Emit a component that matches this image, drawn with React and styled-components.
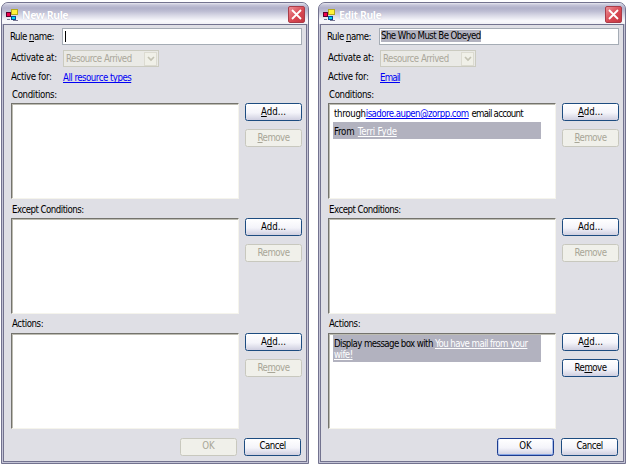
import React from 'react';
import styled, { createGlobalStyle, css } from 'styled-components';

const GlobalStyle = createGlobalStyle`
  * { box-sizing: border-box; }
  body { margin: 0; background: #fff; overflow: hidden; }
`;

const tracking = css`
  letter-spacing: ${(p) => p.$spacing ?? -0.5}px;
`;

const underline = css`
  text-decoration: underline;
  text-underline-offset: 1px;
  text-decoration-thickness: 1px;
  text-decoration-skip-ink: none;
`;

const Desktop = styled.div`
  display: flex;
  gap: 9px;
  width: 627px;
  height: 465px;
  padding: 2px 1px 0;
  font-family: "DejaVu Sans Condensed", "DejaVu Sans", sans-serif;
  font-stretch: condensed;
  font-size: 9.6px;
  line-height: 12px;
  color: #000;
`;

const Window = styled.section`
  display: flex;
  flex-direction: column;
  width: 308px;
  height: 462px;
  padding: 0 1px 1px;
  border: 1px solid #73738f;
  border-radius: 7px 7px 0 0;
  background: #c4c4d6;
  overflow: hidden;
`;

const TitleBar = styled.header`
  display: flex;
  align-items: center;
  flex: 0 0 21px;
  padding: 1px 3px 0 4px;
  margin: 0 -1px;
  background: linear-gradient(#e8e8f0 0, #c4c4d8 2px, #b1b1ca 5px, #bcbcd2 8px, #dcdce8 13px, #fafafd 18px, #f0f0f5 21px);
`;

const Title = styled.h1`
  flex: 1;
  margin: 2px 0 0 3px;
  font-family: "Noto Sans", sans-serif;
  font-size: 10.5px;
  font-weight: 700;
  line-height: 16px;
  letter-spacing: -0.4px;
  color: #fff;
  text-shadow: 0 0 1px #a9a9c0;
`;

const CloseButton = styled.button`
  display: grid;
  place-items: center;
  width: 17px;
  height: 17px;
  padding: 0;
  border: 1px solid #a93c48;
  border-radius: 2px;
  background: linear-gradient(135deg, #ec9097, #d94852 55%, #c33742);
`;

const Client = styled.div`
  flex: 1;
  padding: 3px 4px 0 7px;
  border: 1px solid #73738f;
  background: #dfdfe5;
`;

const Field = styled.div`
  display: flex;
  align-items: center;
  height: ${(p) => p.$height}px;
  margin-left: ${(p) => p.$offset || 0}px;
`;

const FieldLabel = styled.label`
  width: ${(p) => p.$width}px;
  padding-bottom: ${(p) => p.$raise || 0}px;
  white-space: nowrap;
  ${tracking}
`;

const TextBox = styled.div`
  display: flex;
  align-items: center;
  width: 240px;
  height: 17px;
  padding-left: 2px;
  border: 1px solid #a5acb5;
  background: #fff;
`;

const Caret = styled.span`
  width: 1px;
  height: 11px;
  background: #000;
`;

const Selection = styled.span`
  height: 12px;
  margin: 0 0 1px -1px;
  background: #b2b2bf;
  white-space: nowrap;
  letter-spacing: -0.56px;
`;

const Select = styled.div`
  display: flex;
  align-items: center;
  justify-content: space-between;
  width: 96px;
  height: 17px;
  padding: 0 1px 0 2px;
  border: 1px solid #cbcbc0;
  background: #eaeae6;
  color: #aaa89b;
  letter-spacing: -0.48px;
`;

const Arrow = styled.span`
  display: grid;
  place-items: center;
  width: 13px;
  height: 14px;
  border: 1px solid #dcdbd1;
  background: #f0f0e8;
`;

const Link = styled.a`
  color: ${(p) => (p.$light ? '#fff' : '#0000f5')};
  ${underline}
  ${tracking}
`;

const Group = styled.section`
  display: grid;
  grid-template: 19px 96px / 228px 57px;
  column-gap: 6px;
  margin-bottom: 0.1px;
`;

const GroupTitle = styled.h2`
  grid-column: 1 / -1;
  margin: ${(p) => p.$top}px 0 0 1px;
  font: inherit;
  line-height: 13px;
  ${tracking}
`;

const List = styled.div`
  height: 96px;
  padding: ${(p) => p.$top || 0}px 14px 0 4px;
  border: 1px solid;
  border-color: #74736d #f5f4ec #f5f4ec #74736d;
  box-shadow: inset 1px 1px #bdbcb2;
  background: #fff;
`;

const Row = styled.div`
  height: ${(p) => p.$height || 17}px;
  padding: ${(p) => p.$top || 3}px 0 0 1px;
  line-height: 11px;
  white-space: nowrap;
  background: ${(p) => (p.$selected ? '#b2b2bf' : 'transparent')};
`;

const Part = styled.span`
  margin-right: ${(p) => p.$after || 0}px;
  ${tracking}
`;

const ButtonStack = styled.div`
  display: flex;
  flex-direction: column;
  gap: 8px;
`;

const Button = styled.button`
  width: 57px;
  height: 18px;
  padding: 0 0 1px;
  border: 1px solid #1d4c80;
  border-radius: 2.5px;
  background: linear-gradient(#fff, #f4f4fa 55%, #cfcfe0);
  color: #000;
  font: inherit;
  line-height: 14px;
  ${tracking}
  ${(p) => p.$primary && css`
    border-color: #1c3c90;
    box-shadow: inset 0 -1px #86a5e4, inset 1px 0 #bfd1f3, inset -1px 0 #a9c0ec;
  `}
  &:disabled {
    border-color: #c8c8be;
    background: #f0f0ea;
    color: #a8a697;
  }
`;

const Footer = styled.footer`
  display: flex;
  justify-content: flex-end;
  gap: 7px;
  padding: 8.6px 1px 0 0;
`;

const Key = styled.span`
  ${underline}
`;

function FormIcon() {
  return (
    <svg width="13" height="13" viewBox="0 0 13 13">
      <path d="M1 11.5h3M7 12.5h5" stroke="#777792" />
      <rect x=".5" y="4.5" width="4" height="4" fill="#f0004d" stroke="#5b002c" />
      <rect x="5.5" y="1.5" width="6" height="5" fill="#fff23a" stroke="#b3a91c" />
      <rect x="5.5" y="8.5" width="4" height="3" fill="#00d7f0" stroke="#064997" />
    </svg>
  );
}

function CloseIcon() {
  return (
    <svg width="13" height="13" viewBox="0 0 13 13">
      <path d="M2 2l9 9M11 2l-9 9" stroke="#fff" strokeWidth="1.8" />
    </svg>
  );
}

function RuleGroup({ title, titleTop, spacing, add, remove, canRemove, top, children }) {
  return (
    <Group>
      <GroupTitle $top={titleTop} $spacing={spacing}>{title}</GroupTitle>
      <List $top={top}>{children}</List>
      <ButtonStack>
        <Button $spacing={0}>{add}</Button>
        <Button disabled={!canRemove}>{remove}</Button>
      </ButtonStack>
    </Group>
  );
}

function RuleDialog({ title, name, resource, resourceSpacing, conditions, actions, ready }) {
  return (
    <Window>
      <TitleBar>
        <FormIcon />
        <Title>{title}</Title>
        <CloseButton><CloseIcon /></CloseButton>
      </TitleBar>
      <Client>
        <Field $height={17} $offset={-1}>
          <FieldLabel $width={52}>Rule <Key>n</Key>ame:</FieldLabel>
          <TextBox>{name ? <Selection>{name}</Selection> : <Caret />}</TextBox>
        </Field>
        <Field $height={27}>
          <FieldLabel $width={52} $raise={2} $spacing={-0.33}>Activate at:</FieldLabel>
          <Select>
            Resource Arrived
            <Arrow>
              <svg width="8" height="6" viewBox="0 0 8 6">
                <path d="M1 1l3 3 3-3" fill="none" stroke="#c3c2b3" strokeWidth="1.7" />
              </svg>
            </Arrow>
          </Select>
        </Field>
        <Field $height={12}>
          <FieldLabel $width={52} $raise={2} $spacing={-0.3}>Active for:</FieldLabel>
          <Link $spacing={resourceSpacing}>{resource}</Link>
        </Field>
        <RuleGroup title="Conditions:" titleTop={4} spacing={-0.35} top={1} add={<><Key>A</Key>dd...</>} remove={<><Key>R</Key>emove</>}>
          {conditions}
        </RuleGroup>
        <RuleGroup title="Except Conditions:" titleTop={4} add="Add..." remove="Remove" />
        <RuleGroup title="Actions:" titleTop={3} spacing={-0.4} top={1} add={<>A<Key>d</Key>d...</>} remove={<>Re<Key>m</Key>ove</>} canRemove={ready}>
          {actions}
        </RuleGroup>
        <Footer>
          <Button disabled={!ready} $primary={ready} $spacing={0}>OK</Button>
          <Button>Cancel</Button>
        </Footer>
      </Client>
    </Window>
  );
}

export default function App() {
  return (
    <>
      <GlobalStyle />
      <Desktop>
        <RuleDialog title="New Rule" resource="All resource types" />
        <RuleDialog
          title="Edit Rule"
          name="She Who Must Be Obeyed"
          resource="Email"
          resourceSpacing={-0.8}
          ready
          conditions={
            <>
              <Row>
                <Part $spacing={-0.3}>through</Part>
                <Link $spacing={-0.55}>isadore.aupen@zorpp.com</Link> <Part $spacing={-0.72}>email account</Part>
              </Row>
              <Row $selected $top={4}>
                <Part $after={1} $spacing={-0.25}>From </Part>
                <Link $light $spacing={-0.2}>Terri Fyde</Link>
              </Row>
            </>
          }
          actions={
            <Row $selected $height={27}>
              <Part $spacing={-0.58}>Display message box with </Part>
              <Link $light $spacing={-0.54}>You have mail from your<br />wife!</Link>
            </Row>
          }
        />
      </Desktop>
    </>
  );
}
